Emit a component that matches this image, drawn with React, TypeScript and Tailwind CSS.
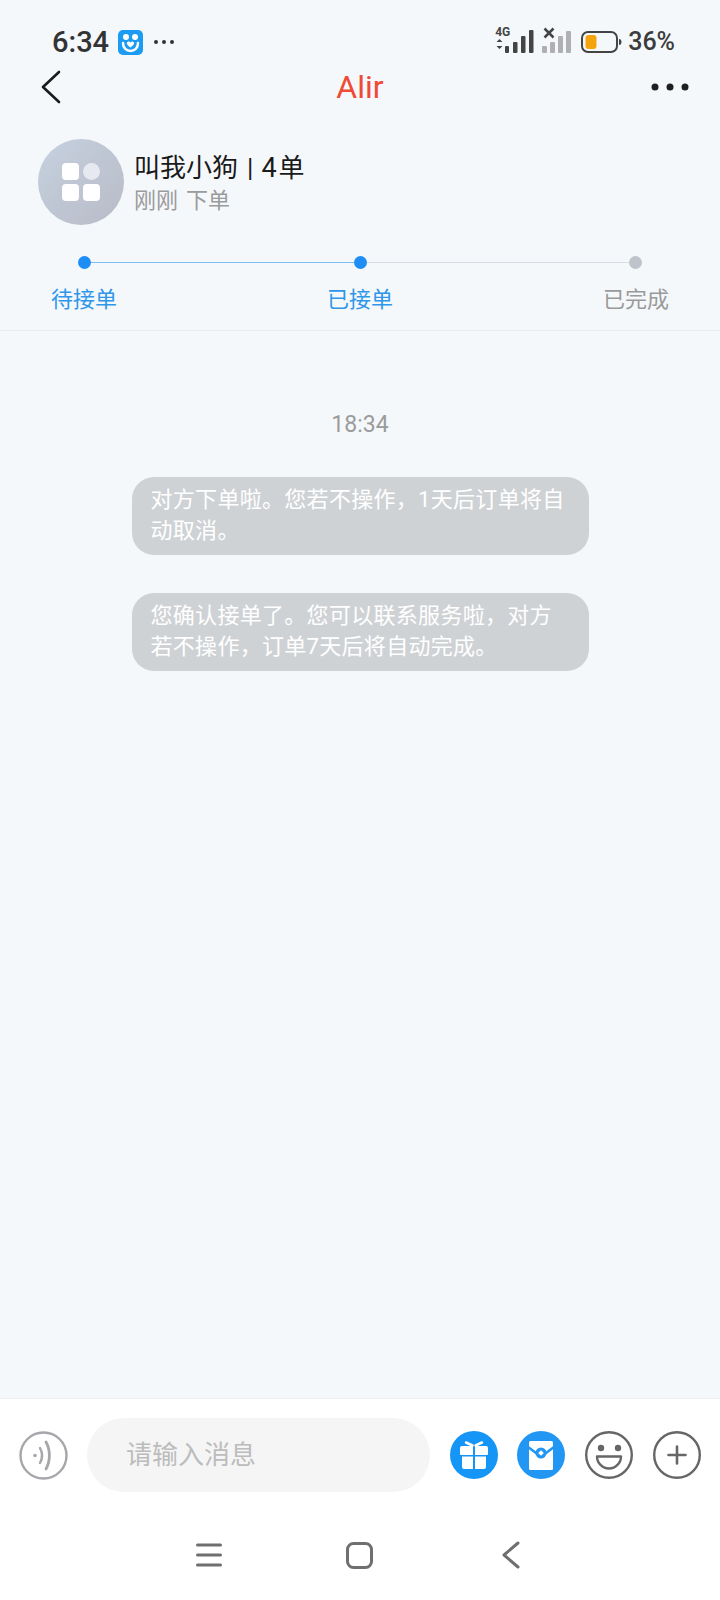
const cjk = "font-['Roboto','Noto_Sans_CJK_SC',sans-serif]";

function StatusBar() {
  return (
    <div className="h-[64px] pt-[20px] pl-[52px] pr-[45px] flex items-center justify-between">
      <div className="flex items-center">
        <span className="w-[57px] text-[29px] leading-[32px] font-medium text-[#333] font-['Roboto',sans-serif]">6:34</span>
        <svg className="ml-[9px]" width="25" height="25" viewBox="0 0 25 25">
          <rect width="25" height="25" rx="5" fill="#1b9cf2" />
          <circle cx="8" cy="7" r="3" fill="#fff" />
          <circle cx="17" cy="7" r="3" fill="#fff" />
          <path d="M5 13c0 5 3.500 8 7.500 8s7.500-3 7.500-8" fill="none" stroke="#fff" strokeWidth="2.500" strokeLinecap="round" />
          <path d="M9 12.500c1.200-1.400 2.600-1 3.500 0 .9-1 2.300-1.400 3.500 0 .8 1.500-1.500 3.500-3.500 5-2-1.500-4.300-3.500-3.500-5z" fill="#fff" />
        </svg>
        <svg className="ml-[10px]" width="22" height="6" viewBox="0 0 22 6" fill="#333">
          <circle cx="3" cy="3" r="2" />
          <circle cx="11" cy="3" r="2" />
          <circle cx="19" cy="3" r="2" />
        </svg>
      </div>
      <div className="flex items-center">
        <div className="relative w-[39px] h-[26px] mb-[4px]">
          <span className="absolute left-0 -top-[1px] text-[12px] leading-[12px] font-bold text-[#444] font-['Roboto',sans-serif]">4G</span>
          <svg className="absolute left-0 bottom-0" width="39" height="23" viewBox="0 0 39 23" fill="#444">
            <path d="M1.500 12l3-3 3 3zM1.500 16l3 3 3-3z" />
            <rect x="10" y="16" width="4" height="7" rx="1" />
            <rect x="18" y="12" width="4.500" height="11" rx="1" />
            <rect x="26" y="6" width="4.500" height="17" rx="1" />
            <rect x="34" y="0" width="4.500" height="23" rx="1" />
          </svg>
        </div>
        <div className="relative ml-[7px] w-[30px] h-[26px] mb-[4px]">
          <svg className="absolute left-0 bottom-0" width="30" height="22" viewBox="0 0 30 22" fill="#b0b0b4">
            <rect x="1" y="15" width="5" height="7" rx="1" />
            <rect x="9" y="11" width="5" height="11" rx="1" />
            <rect x="17" y="5" width="5" height="17" rx="1" />
            <rect x="25" y="0" width="5" height="22" rx="1" />
          </svg>
          <svg className="absolute left-[2px] top-0" width="12" height="12" viewBox="0 0 12 12" stroke="#444" strokeWidth="2.500" fill="none">
            <path d="M1.500 1.500l9 9M10.500 1.500l-9 9" />
          </svg>
        </div>
        <svg className="ml-[10px]" width="41" height="24" viewBox="0 0 41 24">
          <rect x="1" y="2" width="35" height="20" rx="6" fill="none" stroke="#444" strokeWidth="2" />
          <rect x="4.500" y="5" width="11" height="14" rx="3" fill="#f5a30f" />
          <path d="M38 9c2 0 2.500 1.500 2.500 3s-.5 3-2.500 3z" fill="#444" />
        </svg>
        <span className="ml-[6px] text-[25px] leading-[30px] font-medium text-[#3c3c3c] font-['Roboto',sans-serif]">36%</span>
      </div>
    </div>
  );
}

function NavBar() {
  return (
    <div className="h-[46px] px-[31px] flex items-center justify-between">
      <div className="w-[38px] pl-[10px] flex items-center">
        <svg width="20" height="34" viewBox="0 0 20 34" fill="none" stroke="#1a1a1a" strokeWidth="2.600" strokeLinecap="round" strokeLinejoin="round">
          <path d="M18 2L2 17l16 15" />
        </svg>
      </div>
      <span className="text-[32px] leading-[38px] text-[#ef4a35] font-['Roboto',sans-serif]">Alir</span>
      <svg width="38" height="8" viewBox="0 0 38 8" fill="#1f1f1f">
        <circle cx="4" cy="4" r="3.500" />
        <circle cx="19" cy="4" r="3.500" />
        <circle cx="34" cy="4" r="3.500" />
      </svg>
    </div>
  );
}

function OrderHeader() {
  return (
    <div className="pt-[29px] pl-[38px] flex items-center">
      <div className="w-[86px] h-[86px] rounded-full bg-gradient-to-br from-[#c6d1df] to-[#b8bbc7] flex items-center justify-center">
        <div className="grid grid-cols-2 gap-[4px]">
          <div className="w-[17px] h-[17px] rounded-[4px] bg-white" />
          <div className="w-[17px] h-[17px] rounded-full bg-[#e6e9ef]" />
          <div className="w-[17px] h-[17px] rounded-[4px] bg-white" />
          <div className="w-[17px] h-[17px] rounded-[4px] bg-white" />
        </div>
      </div>
      <div className={`ml-[10px] ${cjk}`}>
        <div className="mt-[1px] flex text-[26px] leading-[36px] text-[#1a1a1a]">
          <span>叫我小狗</span>
          <span className="ml-[9px]">|</span>
          <span className="ml-[8px] w-[17px] text-[27px]">4</span>
          <span>单</span>
        </div>
        <div className="flex gap-[8px] text-[22px] leading-[30px] text-[#9b9b9b]">
          <span>刚刚</span>
          <span>下单</span>
        </div>
      </div>
    </div>
  );
}

function Steps() {
  return (
    <div className="border-b border-[#e9ecef] pb-[15px]">
      <div className="mt-[31px] ml-[78px] w-[564px] flex items-center">
        <div className="w-[13px] h-[13px] rounded-full bg-[#1e8df5]" />
        <div className="flex-1 h-[1px] bg-[#7cc0f2]" />
        <div className="w-[13px] h-[13px] rounded-full bg-[#1e8df5]" />
        <div className="flex-1 h-[1px] bg-[#d9dee4]" />
        <div className="w-[13px] h-[13px] rounded-full bg-[#bfc4cc]" />
      </div>
      <div className={`mt-[16px] px-[51px] flex justify-between text-[22px] leading-[30px] ${cjk}`}>
        <span className="text-[#2e97ea]">待接单</span>
        <span className="text-[#2e97ea]">已接单</span>
        <span className="text-[#9a9a9a]">已完成</span>
      </div>
    </div>
  );
}

function Bubble({ children }: { children: string }) {
  return (
    <div className="w-[457px] rounded-[22px] bg-[#cfd2d5] pl-[19px] pr-[20px] pt-[7px] pb-[9px] text-[22px] leading-[31px] tracking-[0.3px] text-white">
      {children}
    </div>
  );
}

function Messages() {
  return (
    <div className={`flex-1 flex flex-col items-center ${cjk}`}>
      <div className="mt-[79px] text-[23px] leading-[30px] text-[#9b9b9b]">18:34</div>
      <div className="mt-[37px] flex flex-col gap-[38px]">
        <Bubble>对方下单啦。您若不操作，1天后订单将自动取消。</Bubble>
        <Bubble>您确认接单了。您可以联系服务啦，对方若不操作，订单7天后将自动完成。</Bubble>
      </div>
    </div>
  );
}

function InputBar() {
  return (
    <div className="bg-white border-t border-[#eceef0] h-[202px]">
      <div className="pt-[19px] pl-[19px] flex items-center">
        <svg width="49" height="49" viewBox="0 0 49 49" fill="none" stroke="#a6a6ab" strokeWidth="2.400" strokeLinecap="round">
          <circle cx="24.500" cy="24.500" r="23" />
          <circle cx="16" cy="24.500" r="1.800" fill="#a6a6ab" stroke="none" />
          <path d="M21 17c2.500 4.500 2.500 10.500 0 15" />
          <path d="M27 11c4.500 8 4.500 19 0 27" strokeWidth="2.800" />
        </svg>
        <div className={`ml-[19px] w-[343px] h-[74px] rounded-[37px] bg-[#f5f5f6] pl-[39px] flex items-center text-[26px] text-[#bcbcbc] ${cjk}`}>
          请输入消息
        </div>
        <svg className="ml-[20px]" width="48" height="48" viewBox="0 0 48 48">
          <circle cx="24" cy="24" r="24" fill="#1595f6" />
          <path d="M16 11.500l6.500 3M32 11.500l-6.500 3" stroke="#fff" strokeWidth="2.500" strokeLinecap="round" />
          <path d="M12 15h11v9H11a1 1 0 0 1-1-1v-6a2 2 0 0 1 2-2zM25 15h11a2 2 0 0 1 2 2v6a1 1 0 0 1-1 1H25z" fill="#fff" />
          <path d="M12 25.500h11V38h-9a2 2 0 0 1-2-2zM25 25.500h11V36a2 2 0 0 1-2 2h-9z" fill="#fff" />
        </svg>
        <svg className="ml-[19px]" width="48" height="48" viewBox="0 0 48 48">
          <circle cx="24" cy="24" r="24" fill="#2196f3" />
          <rect x="12" y="10" width="24" height="29" rx="1.500" fill="#fff" />
          <path d="M11 16l10 7.500M37 16l-10 7.500" stroke="#2196f3" strokeWidth="2.500" fill="none" />
          <circle cx="24" cy="22" r="5.500" fill="#2196f3" />
          <rect x="22" y="20" width="4" height="4" fill="#fff" transform="rotate(45 24 22)" />
        </svg>
        <svg className="ml-[20px]" width="48" height="48" viewBox="0 0 48 48" fill="none" stroke="#666" strokeWidth="2.400">
          <circle cx="24" cy="24" r="22.800" />
          <circle cx="16" cy="17" r="3.200" fill="#666" stroke="none" />
          <circle cx="33" cy="17" r="3.200" fill="#666" stroke="none" />
          <path d="M12 25.500h24c0 6.500-5.500 12-12 12s-12-5.500-12-12z" strokeLinejoin="round" />
        </svg>
        <svg className="ml-[20px]" width="48" height="48" viewBox="0 0 48 48" fill="none" stroke="#666" strokeWidth="2.600" strokeLinecap="round">
          <circle cx="24" cy="24" r="22.800" strokeWidth="2.400" />
          <path d="M15.500 24h17M24 15.500v17" />
        </svg>
      </div>
      <div className="mt-[49px] pl-[196px] flex items-center">
        <svg width="26" height="26" viewBox="0 0 26 26" stroke="#6f6f6f" strokeWidth="3" strokeLinecap="round">
          <path d="M1.500 3h23M1.500 13h23M1.500 23h23" />
        </svg>
        <svg className="ml-[124px]" width="27" height="27" viewBox="0 0 27 27" fill="none" stroke="#6f6f6f" strokeWidth="3">
          <rect x="1.500" y="1.500" width="24" height="24" rx="6" />
        </svg>
        <svg className="ml-[129px]" width="18" height="28" viewBox="0 0 18 28" fill="none" stroke="#6f6f6f" strokeWidth="3" strokeLinecap="round" strokeLinejoin="round">
          <path d="M16 2L2 14l14 12" />
        </svg>
      </div>
    </div>
  );
}

export default function App() {
  return (
    <div className="w-[720px] h-[1600px] bg-[#f5f8fb] flex flex-col overflow-hidden">
      <StatusBar />
      <NavBar />
      <OrderHeader />
      <Steps />
      <Messages />
      <InputBar />
    </div>
  );
}
